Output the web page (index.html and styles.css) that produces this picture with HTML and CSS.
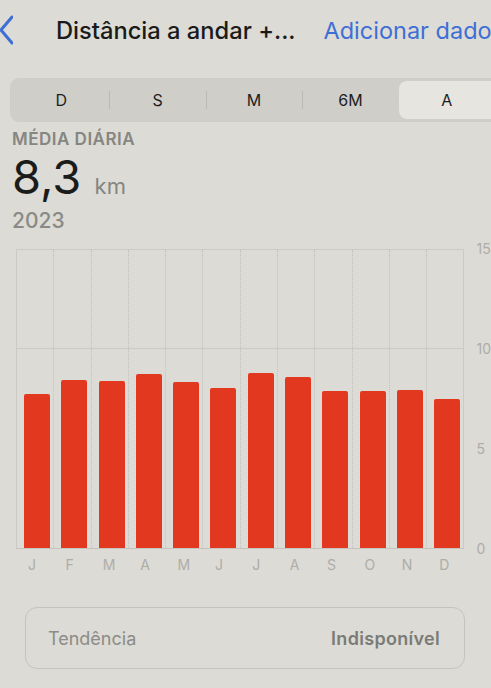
FILE: index.html
```html
<!DOCTYPE html>
<html lang="pt">
<head>
    <meta charset="UTF-8">
    <meta name="viewport" content="width=device-width, initial-scale=1.0">
    <title>Distância a andar + correr</title>
    <link rel="stylesheet" href="styles.css">
</head>
<body>
    <div class="screen">
        <header class="nav">
            <svg class="back" width="14" height="30" viewBox="0 0 14 30">
                <polyline points="13,2 2,15 13,28" fill="none" stroke="#3d6fd6" stroke-width="3" stroke-linecap="round" stroke-linejoin="round"/>
            </svg>
            <h1 class="title">Distância a andar +...</h1>
            <a class="add-link">Adicionar dados</a>
        </header>

        <div class="segmented">
            <div class="segment">D</div>
            <div class="segment">S</div>
            <div class="segment">M</div>
            <div class="segment">6M</div>
            <div class="segment active">A</div>
        </div>

        <div class="summary">
            <div class="summary-label">MÉDIA DIÁRIA</div>
            <div class="summary-value">8,3 <span class="unit">km</span></div>
            <div class="summary-period">2023</div>
        </div>

        <div class="chart">
            <div class="chart-main">
                <div class="plot">
                    <div class="col"><div class="bar" style="height: 51.7%"></div></div>
                    <div class="col"><div class="bar" style="height: 56.3%"></div></div>
                    <div class="col"><div class="bar" style="height: 56%"></div></div>
                    <div class="col"><div class="bar" style="height: 58.3%"></div></div>
                    <div class="col"><div class="bar" style="height: 55.7%"></div></div>
                    <div class="col"><div class="bar" style="height: 53.7%"></div></div>
                    <div class="col"><div class="bar" style="height: 58.7%"></div></div>
                    <div class="col"><div class="bar" style="height: 57.3%"></div></div>
                    <div class="col"><div class="bar" style="height: 52.7%"></div></div>
                    <div class="col"><div class="bar" style="height: 52.7%"></div></div>
                    <div class="col"><div class="bar" style="height: 53%"></div></div>
                    <div class="col"><div class="bar" style="height: 50%"></div></div>
                </div>
                <div class="x-labels">
                    <span>J</span><span>F</span><span>M</span><span>A</span>
                    <span>M</span><span>J</span><span>J</span><span>A</span>
                    <span>S</span><span>O</span><span>N</span><span>D</span>
                </div>
            </div>
            <div class="y-labels">
                <span>15</span>
                <span>10</span>
                <span>5</span>
                <span>0</span>
            </div>
        </div>

        <div class="trend-card">
            <span class="trend-label">Tendência</span>
            <span class="trend-value">Indisponível</span>
        </div>
    </div>
</body>
</html>
```

FILE: styles.css
```css
* {
    margin: 0;
    padding: 0;
    box-sizing: border-box;
}

body {
    font-family: Inter, "Noto Sans", "Liberation Sans", sans-serif;
    background: #dcdbd5;
    color: #1c1c1c;
    overflow: hidden;
}

.screen {
    width: 491px;
    height: 688px;
    overflow: hidden;
}

.nav {
    display: flex;
    align-items: center;
    height: 60px;
    white-space: nowrap;
}

.back {
    flex-shrink: 0;
    margin-left: -1px;
}

.title {
    flex-shrink: 0;
    margin-left: 43px;
    font-size: 23.7px;
    font-weight: 500;
    color: #1a1a1a;
}

.add-link {
    flex-shrink: 0;
    margin-left: 28px;
    font-size: 23.5px;
    font-weight: 400;
    color: #3d6fd6;
}

.segmented {
    display: flex;
    flex-shrink: 0;
    width: 500px;
    height: 44px;
    margin: 18px 0 0 10px;
    padding: 3px;
    background: #cfcec8;
    border-radius: 9px;
}

.segment {
    flex: 1;
    position: relative;
    display: flex;
    align-items: center;
    justify-content: center;
    font-size: 16px;
    color: #1e1e1e;
}

.segment + .segment:not(.active)::before {
    content: "";
    position: absolute;
    left: 0;
    top: 10px;
    bottom: 10px;
    width: 1px;
    background: #bab9b3;
}

.segment.active {
    background: #e6e5e0;
    border-radius: 8px;
    padding-right: 12px;
}

.summary {
    padding: 7px 0 0 12px;
}

.summary-label {
    font-size: 17px;
    line-height: 20px;
    font-weight: 600;
    color: #858581;
    letter-spacing: 0.5px;
}

.summary-value {
    font-size: 47px;
    line-height: 44px;
    color: #1b1b1b;
    margin-top: 6px;
}

.unit {
    font-size: 22px;
    font-weight: 400;
    color: #858581;
}

.summary-period {
    font-size: 21px;
    font-weight: 500;
    color: #8a8a86;
    margin-top: 0;
}

.chart {
    display: flex;
    margin-top: 16px;
    padding-left: 16px;
}

.chart-main {
    width: 450px;
}

.plot {
    display: flex;
    height: 300px;
    border: 1px solid #cbcac4;
    border-bottom-color: #c4c3bd;
    background: linear-gradient(to bottom, transparent calc(33.33% - 1px), #cbcac4 calc(33.33% - 1px), #cbcac4 33.33%, transparent 33.33%);
}

.col {
    flex: 1;
    display: flex;
    align-items: flex-end;
    padding-left: 7px;
}

.col + .col {
    border-left: 1px dotted #c2c1bb;
}

.bar {
    width: 26px;
    background: #e1381f;
    border-radius: 2px 2px 0 0;
}

.x-labels {
    display: flex;
    padding-top: 7px;
}

.x-labels span {
    flex: 1;
    padding-left: 12px;
    font-size: 14px;
    color: #aeada8;
}

.y-labels {
    display: flex;
    flex-direction: column;
    justify-content: space-between;
    height: 320px;
    margin-top: -10px;
    padding-left: 12px;
    font-size: 14px;
    line-height: 20px;
    color: #aeada8;
}

.trend-card {
    display: flex;
    justify-content: space-between;
    align-items: center;
    height: 62px;
    margin: 34px 26px 0 25px;
    padding: 0 24px 0 22px;
    border: 1px solid #c4c3be;
    border-radius: 12px;
    font-size: 18px;
}

.trend-label {
    color: #8c8c88;
}

.trend-value {
    font-weight: 600;
    color: #7b7b77;
    letter-spacing: 0.3px;
}
```
